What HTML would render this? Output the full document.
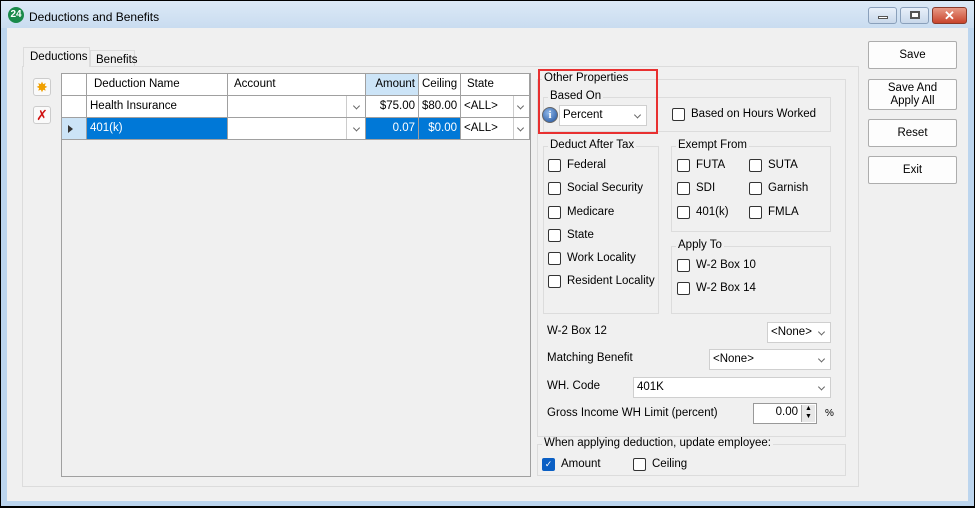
<!DOCTYPE html><html><head><style>
*{box-sizing:border-box;margin:0;padding:0}
body{width:975px;height:508px;background:#000;font-family:"Liberation Sans",sans-serif;font-size:11.5px;color:#000;position:relative;overflow:hidden}
.a{position:absolute}
.t{position:absolute;white-space:nowrap;font-size:11.5px}
.cb{position:absolute;width:13px;height:13px;border:1px solid #333;background:#fff;border-radius:2px}
.grp{position:absolute;border:1px solid #dcdcdc}
.lg{position:absolute;background:#f0f0f0;padding:0 2px;top:-8px;left:4px;white-space:nowrap}
.dd{position:absolute;background:#fff;border:1px solid #cfcfcf}
.chev{position:absolute;right:6px;top:50%;width:5px;height:5px;border-right:1px solid #666;border-bottom:1px solid #666;transform:translateY(-70%) rotate(45deg)}
.btn{position:absolute;left:868px;width:89px;background:#fdfdfd;border:1px solid #adadad;border-radius:2px;text-align:center;font-size:11.5px}
.cell{position:absolute;border-right:1px solid #a0a0a0;border-bottom:1px solid #a0a0a0;height:22px;line-height:21px;padding:0 3px;white-space:nowrap}
</style></head><body>
<div class="a" style="left:1px;top:1px;width:973px;height:505px;background:#bcd5ee"></div>
<div class="a" style="left:1px;top:1px;width:973px;height:27px;background:linear-gradient(#dce9f6,#c9dcf0)"></div>
<div class="a" style="left:8px;top:7px;width:16px;height:16px;border-radius:50%;background:#1a8a4a;color:#fff;font-size:10px;font-weight:bold;text-align:center;line-height:16px">24</div>
<div class="t" style="left:29px;top:10px;font-size:12px">Deductions and Benefits</div>
<div class="a" style="left:868px;top:7px;width:29px;height:17px;border:1px solid #8aa0bb;border-radius:3px;background:linear-gradient(#e8f0fa,#c9d8ea)"><div class="a" style="left:9px;top:8px;width:10px;height:3px;background:#fff;border:1px solid #555"></div></div>
<div class="a" style="left:900px;top:7px;width:29px;height:17px;border:1px solid #8aa0bb;border-radius:3px;background:linear-gradient(#e8f0fa,#c9d8ea)"><div class="a" style="left:9px;top:3px;width:10px;height:8px;background:#fff;border:2px solid #555"></div></div>
<div class="a" style="left:932px;top:7px;width:35px;height:17px;border:1px solid #8a3a2a;border-radius:3px;background:linear-gradient(#e89a86,#c8442c);color:#fff;font-weight:bold;text-align:center;line-height:15px;font-size:13px">✕</div>
<div class="a" style="left:7px;top:28px;width:961px;height:473px;background:#f0f0f0"></div>
<div class="a" style="left:22px;top:66px;width:837px;height:421px;border:1px solid #dcdcdc;background:#f0f0f0"></div>
<div class="a" style="left:23px;top:47px;width:67px;height:20px;background:#f0f0f0;border:1px solid #dcdcdc;border-bottom:none"></div>
<div class="t" style="left:30px;top:51px">Deductions</div>
<div class="a" style="left:90px;top:50px;width:45px;height:16px;background:#f0f0f0;border:1px solid #dcdcdc;border-bottom:none"></div>
<div class="t" style="left:96px;top:54px">Benefits</div>
<div class="a" style="left:33px;top:78px;width:18px;height:18px;border:1px solid #ccc;border-radius:3px;background:#fafafa;color:#f0a000;text-align:center;line-height:16px;font-size:14px">✸</div>
<div class="a" style="left:33px;top:106px;width:18px;height:18px;border:1px solid #ccc;border-radius:3px;background:#fafafa;color:#d01010;text-align:center;line-height:16px;font-size:14px">✗</div>
<div class="a" style="left:61px;top:73px;width:470px;height:404px;border:1px solid #a0a0a0;background:#f0f0f0"></div>
<div class="cell" style="left:62px;top:74px;width:25px;background:#fff"></div>
<div class="cell" style="left:87px;top:74px;width:141px;background:#fff;padding-left:7px">Deduction Name</div>
<div class="cell" style="left:228px;top:74px;width:138px;background:#fff;padding-left:6px">Account</div>
<div class="cell" style="left:366px;top:74px;width:53px;background:#cce4f7;text-align:right">Amount</div>
<div class="cell" style="left:419px;top:74px;width:42px;background:#fff;text-align:right;padding-right:4px">Ceiling</div>
<div class="cell" style="left:461px;top:74px;width:69px;background:#fff;padding-left:6px">State</div>
<div class="cell" style="left:62px;top:96px;width:25px;background:#fff"></div>
<div class="cell" style="left:87px;top:96px;width:141px;background:#fff">Health Insurance</div>
<div class="cell" style="left:228px;top:96px;width:138px;background:#fff"><div class="a" style="left:118px;top:0;height:21px;border-left:1px solid #ccc"></div><div class="chev"></div></div>
<div class="cell" style="left:366px;top:96px;width:53px;background:#fff;text-align:right">$75.00</div>
<div class="cell" style="left:419px;top:96px;width:42px;background:#fff;text-align:right">$80.00</div>
<div class="cell" style="left:461px;top:96px;width:69px;background:#fff">&lt;ALL&gt;<div class="a" style="left:52px;top:0;height:21px;border-left:1px solid #ccc"></div><div class="chev"></div></div>
<div class="cell" style="left:62px;top:118px;width:25px;background:#cce4f7"><div class="a" style="left:6px;top:7px;border-left:5px solid #333;border-top:4px solid transparent;border-bottom:4px solid transparent"></div></div>
<div class="cell" style="left:87px;top:118px;width:141px;background:#0078d7;color:#fff">401(k)</div>
<div class="cell" style="left:228px;top:118px;width:138px;background:#fff"><div class="a" style="left:118px;top:0;height:21px;border-left:1px solid #ccc"></div><div class="chev"></div></div>
<div class="cell" style="left:366px;top:118px;width:53px;background:#0078d7;color:#fff;text-align:right">0.07</div>
<div class="cell" style="left:419px;top:118px;width:42px;background:#0078d7;color:#fff;text-align:right">$0.00</div>
<div class="cell" style="left:461px;top:118px;width:69px;background:#fff">&lt;ALL&gt;<div class="a" style="left:52px;top:0;height:21px;border-left:1px solid #ccc"></div><div class="chev"></div></div>
<div class="grp" style="left:537px;top:79px;width:309px;height:358px"><span class="lg">Other Properties</span></div>
<div class="grp" style="left:543px;top:97px;width:288px;height:35px"><span class="lg">Based On</span></div>
<div class="a" style="left:542px;top:107px;width:16px;height:16px;border-radius:50%;background:radial-gradient(circle at 40% 35%,#8fb8ea,#1d4f9a);border:1px solid #666;color:#fff;font-size:11px;font-weight:bold;text-align:center;line-height:14px;font-family:'Liberation Serif',serif">i</div>
<div class="dd" style="left:559px;top:105px;width:88px;height:21px"><span class="t" style="left:3px;top:3px">Percent</span><div class="chev"></div></div>
<div class="cb" style="left:672px;top:108px"></div><div class="t" style="left:691px;top:108px">Based on Hours Worked</div>
<div class="a" style="left:538px;top:69px;width:120px;height:65px;border:2px solid #e83030"></div>
<div class="grp" style="left:543px;top:146px;width:116px;height:168px"><span class="lg">Deduct After Tax</span></div>
<div class="cb" style="left:548px;top:159px"></div><div class="t" style="left:567px;top:159px">Federal</div>
<div class="cb" style="left:548px;top:182px"></div><div class="t" style="left:567px;top:182px">Social Security</div>
<div class="cb" style="left:548px;top:206px"></div><div class="t" style="left:567px;top:206px">Medicare</div>
<div class="cb" style="left:548px;top:229px"></div><div class="t" style="left:567px;top:229px">State</div>
<div class="cb" style="left:548px;top:252px"></div><div class="t" style="left:567px;top:252px">Work Locality</div>
<div class="cb" style="left:548px;top:275px"></div><div class="t" style="left:567px;top:275px">Resident Locality</div>
<div class="grp" style="left:671px;top:146px;width:160px;height:86px"><span class="lg">Exempt From</span></div>
<div class="cb" style="left:677px;top:159px"></div><div class="t" style="left:696px;top:159px">FUTA</div>
<div class="cb" style="left:749px;top:159px"></div><div class="t" style="left:768px;top:159px">SUTA</div>
<div class="cb" style="left:677px;top:182px"></div><div class="t" style="left:696px;top:182px">SDI</div>
<div class="cb" style="left:749px;top:182px"></div><div class="t" style="left:768px;top:182px">Garnish</div>
<div class="cb" style="left:677px;top:206px"></div><div class="t" style="left:696px;top:206px">401(k)</div>
<div class="cb" style="left:749px;top:206px"></div><div class="t" style="left:768px;top:206px">FMLA</div>
<div class="grp" style="left:671px;top:246px;width:160px;height:68px"><span class="lg">Apply To</span></div>
<div class="cb" style="left:677px;top:259px"></div><div class="t" style="left:696px;top:259px">W-2 Box 10</div>
<div class="cb" style="left:677px;top:282px"></div><div class="t" style="left:696px;top:282px">W-2 Box 14</div>
<div class="t" style="left:547px;top:325px">W-2 Box 12</div>
<div class="dd" style="left:767px;top:322px;width:64px;height:21px"><span class="t" style="left:3px;top:3px">&lt;None&gt;</span><div class="chev"></div></div>
<div class="t" style="left:547px;top:352px">Matching Benefit</div>
<div class="dd" style="left:709px;top:349px;width:122px;height:21px"><span class="t" style="left:3px;top:3px">&lt;None&gt;</span><div class="chev"></div></div>
<div class="t" style="left:547px;top:380px">WH. Code</div>
<div class="dd" style="left:633px;top:377px;width:198px;height:21px"><span class="t" style="left:3px;top:3px">401K</span><div class="chev"></div></div>
<div class="t" style="left:547px;top:407px">Gross Income WH Limit (percent)</div>
<div class="dd" style="left:753px;top:403px;width:64px;height:21px;border-color:#999"><span class="t" style="right:18px;top:2px">0.00</span><div class="a" style="right:1px;top:1px;width:14px;height:17px;background:#e8e8e8;border-left:1px solid #aaa;font-size:7px;line-height:8px;text-align:center">▲<br>▼</div></div>
<div class="t" style="left:825px;top:408px;font-size:10px">%</div>
<div class="grp" style="left:537px;top:444px;width:309px;height:32px"><span class="lg">When applying deduction, update employee:</span></div>
<div class="a" style="left:542px;top:458px;width:13px;height:13px;border-radius:2px;background:#0a5fc4;color:#fff;font-size:9px;text-align:center;line-height:13px">✓</div>
<div class="t" style="left:561px;top:458px">Amount</div>
<div class="cb" style="left:633px;top:458px"></div><div class="t" style="left:652px;top:458px">Ceiling</div>
<div class="btn" style="top:41px;height:28px;line-height:26px">Save</div>
<div class="btn" style="top:79px;height:31px;line-height:13px;padding-top:2px">Save And<br>Apply All</div>
<div class="btn" style="top:119px;height:28px;line-height:26px">Reset</div>
<div class="btn" style="top:156px;height:28px;line-height:26px">Exit</div>
</body></html>
